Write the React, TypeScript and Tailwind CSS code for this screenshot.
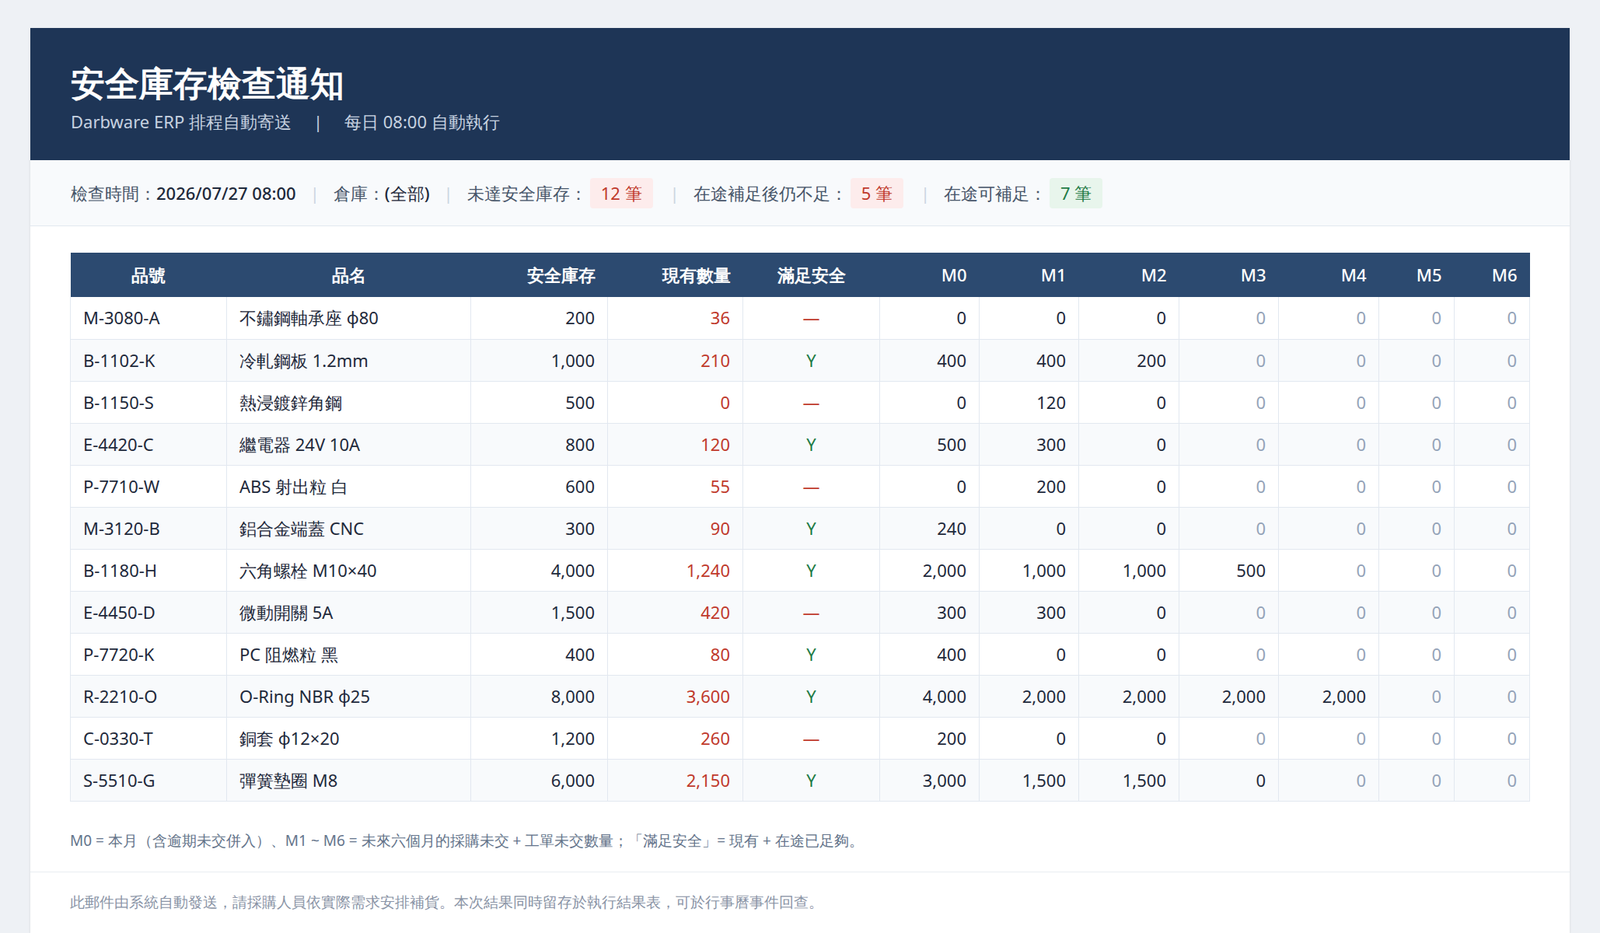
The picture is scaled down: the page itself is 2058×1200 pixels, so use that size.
const rows: [string, string, string, string, boolean, string[], number][] = [
  ["M-3080-A", "不鏽鋼軸承座 φ80", "200", "36", false, ["0", "0", "0", "0", "0", "0", "0"], 3],
  ["B-1102-K", "冷軋鋼板 1.2mm", "1,000", "210", true, ["400", "400", "200", "0", "0", "0", "0"], 3],
  ["B-1150-S", "熱浸鍍鋅角鋼", "500", "0", false, ["0", "120", "0", "0", "0", "0", "0"], 3],
  ["E-4420-C", "繼電器 24V 10A", "800", "120", true, ["500", "300", "0", "0", "0", "0", "0"], 3],
  ["P-7710-W", "ABS 射出粒 白", "600", "55", false, ["0", "200", "0", "0", "0", "0", "0"], 3],
  ["M-3120-B", "鋁合金端蓋 CNC", "300", "90", true, ["240", "0", "0", "0", "0", "0", "0"], 3],
  ["B-1180-H", "六角螺栓 M10×40", "4,000", "1,240", true, ["2,000", "1,000", "1,000", "500", "0", "0", "0"], 4],
  ["E-4450-D", "微動開關 5A", "1,500", "420", false, ["300", "300", "0", "0", "0", "0", "0"], 3],
  ["P-7720-K", "PC 阻燃粒 黑", "400", "80", true, ["400", "0", "0", "0", "0", "0", "0"], 3],
  ["R-2210-O", "O-Ring NBR φ25", "8,000", "3,600", true, ["4,000", "2,000", "2,000", "2,000", "2,000", "0", "0"], 5],
  ["C-0330-T", "銅套 φ12×20", "1,200", "260", false, ["200", "0", "0", "0", "0", "0", "0"], 3],
  ["S-5510-G", "彈簧墊圈 M8", "6,000", "2,150", true, ["3,000", "1,500", "1,500", "0", "0", "0", "0"], 4],
];

const mW = ["w-[128px]", "w-[128px]", "w-[129px]", "w-[128px]", "w-[129px]", "w-[97px]", "w-[97px]"];

export default function App() {
  return (
    <div className="min-h-[1200px] bg-[#eef1f5] pt-[36px] px-[39px] font-['Noto_Sans_CJK_TC','Noto_Sans',sans-serif]">
      <div className="bg-white shadow-sm min-h-[1164px]">
        <div className="bg-[#1e3556] h-[170px] px-[52px] pt-[40px]">
          <h1 className="text-[44px] leading-[60px] font-bold text-white">安全庫存檢查通知</h1>
          <p className="mt-[4px] text-[22px] text-[#c7d2e0] flex gap-[28px]">
            <span>Darbware ERP 排程自動寄送</span>
            <span>|</span>
            <span>每日 08:00 自動執行</span>
          </p>
        </div>
        <div className="bg-[#f8fafc] border-b border-[#e2e8f0] h-[85px] px-[52px] flex items-center gap-[18px] text-[22px] text-[#475569]">
          <span>檢查時間：<b className="font-medium text-[#1e293b]">2026/07/27 08:00</b></span>
          <span className="text-[#cbd5e1]">|</span>
          <span>倉庫：<b className="font-medium text-[#1e293b]">(全部)</b></span>
          <span className="text-[#cbd5e1]">|</span>
          <span className="flex items-center">未達安全庫存：<span className="ml-[4px] bg-[#fdecec] text-[#c0392b] rounded px-[14px] py-[3px]">12 筆</span></span>
          <span className="text-[#cbd5e1] ml-[4px]">|</span>
          <span className="flex items-center">在途補足後仍不足：<span className="ml-[4px] bg-[#fdecec] text-[#c0392b] rounded px-[14px] py-[3px]">5 筆</span></span>
          <span className="text-[#cbd5e1] ml-[4px]">|</span>
          <span className="flex items-center">在途可補足：<span className="ml-[4px] bg-[#e8f5ec] text-[#1e7b45] rounded px-[14px] py-[3px]">7 筆</span></span>
        </div>
        <div className="px-[51px] pt-[34px]">
          <table className="w-[1878px] border-collapse text-[22px] text-[#1e293b]">
            <thead>
              <tr className="bg-[#2c4a70] text-white h-[57px] font-bold">
                <th className="w-[201px] text-center">品號</th>
                <th className="w-[314px] text-center">品名</th>
                <th className="w-[176px] text-right pr-[16px]">安全庫存</th>
                <th className="w-[174px] text-right pr-[16px]">現有數量</th>
                <th className="w-[176px] text-center">滿足安全</th>
                {["M0", "M1", "M2", "M3", "M4", "M5", "M6"].map((m, i) => (
                  <th key={m} className={`${mW[i]} text-right pr-[16px] font-medium`}>{m}</th>
                ))}
              </tr>
            </thead>
            <tbody>
              {rows.map((r, ri) => (
                <tr key={r[0]} className={`h-[54px] border-b border-[#e2e8f0] ${ri % 2 ? "bg-[#f8fafc]" : "bg-white"}`}>
                  <td className="pl-[16px] border-l border-[#e2e8f0]">{r[0]}</td>
                  <td className="pl-[16px] border-l border-[#e2e8f0]">{r[1]}</td>
                  <td className="text-right pr-[16px] border-l border-[#e2e8f0]">{r[2]}</td>
                  <td className="text-right pr-[16px] border-l border-[#e2e8f0] text-[#c0392b]">{r[3]}</td>
                  <td className={`text-center border-l border-[#e2e8f0] ${r[4] ? "text-[#1e7b45]" : "text-[#c0392b]"}`}>{r[4] ? "Y" : "—"}</td>
                  {r[5].map((v, i) => (
                    <td key={i} className={`text-right pr-[16px] border-l border-[#e2e8f0] ${i === 6 ? "border-r" : ""} ${i >= r[6] ? "text-[#94a3b8]" : ""}`}>{v}</td>
                  ))}
                </tr>
              ))}
            </tbody>
          </table>
          <p className="mt-[36px] text-[19px] text-[#64748b]">M0 = 本月（含逾期未交併入）、M1 ~ M6 = 未來六個月的採購未交 + 工單未交數量；「滿足安全」= 現有 + 在途已足夠。</p>
        </div>
        <div className="mt-[26px] border-t border-[#e9edf2] px-[51px] pt-[24px] text-[19px] text-[#8a94a6]">
          此郵件由系統自動發送，請採購人員依實際需求安排補貨。本次結果同時留存於執行結果表，可於行事曆事件回查。
        </div>
      </div>
    </div>
  );
}
